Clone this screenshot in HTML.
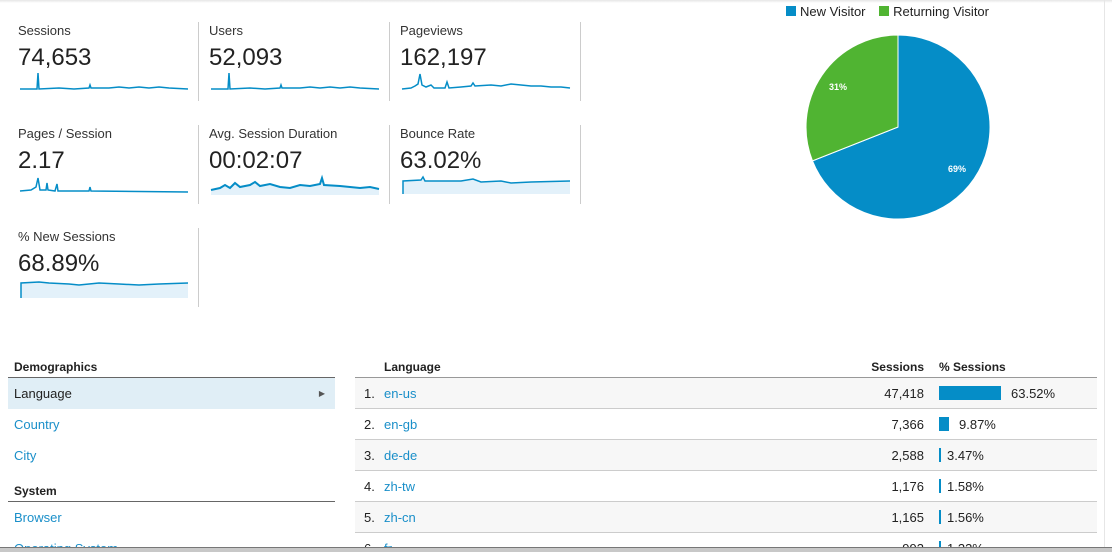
<!DOCTYPE html>
<html><head><meta charset="utf-8"><style>
body{margin:0;width:1112px;height:551px;overflow:hidden;background:#fff;font-family:"Liberation Sans",sans-serif;color:#222;position:relative}
.topsh{position:absolute;left:0;top:0;width:1112px;height:3px;background:linear-gradient(#e6e6e6,#fff)}
.m{position:absolute;width:180px;height:103px}
.m .l{position:absolute;left:0;top:23px;font-size:13px;color:#333}
.m .v{position:absolute;left:0;top:44px;font-size:24px;color:#222}
.m svg{position:absolute;left:1px;top:70px}
.d{position:absolute;width:1px;background:#ccc}
.a{color:#1a8fc9}
.nr{height:31px;line-height:31px;padding-left:6px}
.tr{height:30px;border-bottom:1px solid #ccc;position:relative;line-height:31px}
</style></head><body>
<div class="topsh"></div>
<div class="d" style="left:198px;top:22px;height:79px"></div>
<div class="d" style="left:389px;top:22px;height:79px"></div>
<div class="d" style="left:580px;top:22px;height:79px"></div>
<div class="d" style="left:198px;top:125px;height:79px"></div>
<div class="d" style="left:389px;top:125px;height:79px"></div>
<div class="d" style="left:580px;top:125px;height:79px"></div>
<div class="d" style="left:198px;top:228px;height:79px"></div>

<div class="m" style="left:18px;top:0"><div class="l">Sessions</div><div class="v">74,653</div>
<svg width="170" height="24"><path d="M1,19 L18,19 L19,3 L20,19 L40,18 L55,19 L70,18 L71,15 L72,18 L90,18 L100,17 L110,18 L120,17 L130,18 L140,17 L150,18 L169,19" fill="none" stroke="#058dc7" stroke-width="1.5"/></svg></div>
<div class="m" style="left:209px;top:0"><div class="l">Users</div><div class="v">52,093</div>
<svg width="170" height="24"><path d="M1,19 L18,19 L19,3 L20,19 L40,18 L55,19 L70,18 L71,15 L72,18 L90,18 L100,17 L110,18 L120,17 L130,18 L140,17 L150,18 L169,19" fill="none" stroke="#058dc7" stroke-width="1.5"/></svg></div>
<div class="m" style="left:400px;top:0"><div class="l">Pageviews</div><div class="v">162,197</div>
<svg width="170" height="24"><path d="M1,19 L10,18 L14,16 L17,14 L19,4 L21,15 L25,17 L30,15 L33,18 L44,18 L46,12 L48,18 L60,17 L70,16 L72,13 L74,16 L90,15 L100,16 L110,14 L120,15 L130,16 L140,16 L150,17 L160,17 L169,18" fill="none" stroke="#058dc7" stroke-width="1.5"/></svg></div>

<div class="m" style="left:18px;top:103px"><div class="l">Pages / Session</div><div class="v">2.17</div>
<svg width="170" height="24"><path d="M1,18 L12,17 L17,14 L19,5 L21,17 L27,17 L28,10 L29,17 L36,18 L38,11 L39,18 L70,18 L71,14 L72,18 L169,19" fill="none" stroke="#058dc7" stroke-width="1.5"/></svg></div>
<div class="m" style="left:209px;top:103px"><div class="l">Avg. Session Duration</div><div class="v">00:02:07</div>
<svg width="170" height="24"><path d="M1,17 L10,15 L15,12 L20,15 L25,10 L30,14 L40,12 L45,9 L50,13 L60,11 L70,14 L80,15 L90,12 L100,13 L110,11 L112,5 L114,12 L130,13 L150,15 L160,14 L169,16 L169,22 L1,22Z" fill="#e3f1fa" stroke="none"/><path d="M1,17 L10,15 L15,12 L20,15 L25,10 L30,14 L40,12 L45,9 L50,13 L60,11 L70,14 L80,15 L90,12 L100,13 L110,11 L112,5 L114,12 L130,13 L150,15 L160,14 L169,16" fill="none" stroke="#058dc7" stroke-width="2"/></svg></div>
<div class="m" style="left:400px;top:103px"><div class="l">Bounce Rate</div><div class="v">63.02%</div>
<svg width="170" height="24"><path d="M2,21 L2,8 L20,7 L22,4 L24,8 L60,8 L72,6 L80,9 L100,8 L110,10 L130,9 L169,8 L169,21Z" fill="#e3f1fa" stroke="none"/><path d="M2,21 L2,8 L20,7 L22,4 L24,8 L60,8 L72,6 L80,9 L100,8 L110,10 L130,9 L169,8" fill="none" stroke="#058dc7" stroke-width="1.5"/></svg></div>

<div class="m" style="left:18px;top:206px"><div class="l">% New Sessions</div><div class="v">68.89%</div>
<svg width="170" height="26"><path d="M2,22 L2,7 L20,6 L30,7 L50,8 L60,9 L80,7 L100,8 L120,9 L140,8 L169,7 L169,22Z" fill="#e3f1fa"/><path d="M2,22 L2,7 L20,6 L30,7 L50,8 L60,9 L80,7 L100,8 L120,9 L140,8 L169,7" fill="none" stroke="#058dc7" stroke-width="1.5"/></svg></div>

<div style="position:absolute;left:786px;top:4px;font-size:13px;color:#222">
<span style="display:inline-block;width:10px;height:10px;background:#058dc7;margin-right:4px"></span>New Visitor
<span style="display:inline-block;width:10px;height:10px;background:#50b432;margin:0 4px 0 10px"></span>Returning Visitor</div>
<svg style="position:absolute;left:0;top:0" width="1112" height="240">
<path d="M898,127 L898,35 A92,92 0 1 1 812.5,160.9 Z" fill="#058dc7" stroke="#fff" stroke-width="1"/>
<path d="M898,127 L812.5,160.9 A92,92 0 0 1 898,35 Z" fill="#50b432" stroke="#fff" stroke-width="1"/>
<text x="948" y="172" font-size="9" font-weight="bold" fill="#fff" font-family="Liberation Sans">69%</text>
<text x="829" y="90" font-size="9" font-weight="bold" fill="#fff" font-family="Liberation Sans">31%</text>
</svg>
<div style="position:absolute;left:1104px;top:0;width:1px;height:551px;background:#e6e6e6"></div>

<div style="position:absolute;left:8px;top:358px;width:327px;height:189px;overflow:hidden;font-size:13px">
<div style="font-weight:bold;padding:2px 6px 3px;border-bottom:1px solid #666;height:14px;font-size:12px">Demographics</div>
<div class="nr" style="background:#e0eef6;position:relative">Language<span style="position:absolute;right:10px;font-size:8px;color:#555">&#9654;</span></div>
<div class="a nr">Country</div>
<div class="a nr">City</div>
<div style="font-weight:bold;padding:13px 6px 3px;border-bottom:1px solid #666;height:14px;font-size:12px">System</div>
<div class="a nr">Browser</div>
<div class="a nr">Operating System</div>
</div>

<div style="position:absolute;left:355px;top:358px;width:742px;height:189px;overflow:hidden;font-size:13px">
<div style="height:19px;border-bottom:1px solid #999;font-weight:bold;position:relative;font-size:12px">
<span style="position:absolute;left:29px;top:2px">Language</span>
<span style="position:absolute;right:173px;top:2px">Sessions</span>
<span style="position:absolute;left:584px;top:2px">% Sessions</span></div>
<div class="tr" style="background:#f7f7f7"><span style="position:absolute;left:9px">1.</span><span class="a" style="position:absolute;left:29px">en-us</span><span style="position:absolute;right:173px">47,418</span><span style="position:absolute;left:584px;top:8px;width:62px;height:14px;background:#058dc7"></span><span style="position:absolute;left:656px">63.52%</span></div>
<div class="tr"><span style="position:absolute;left:9px">2.</span><span class="a" style="position:absolute;left:29px">en-gb</span><span style="position:absolute;right:173px">7,366</span><span style="position:absolute;left:584px;top:8px;width:10px;height:14px;background:#058dc7"></span><span style="position:absolute;left:604px">9.87%</span></div>
<div class="tr" style="background:#f7f7f7"><span style="position:absolute;left:9px">3.</span><span class="a" style="position:absolute;left:29px">de-de</span><span style="position:absolute;right:173px">2,588</span><span style="position:absolute;left:584px;top:8px;width:2px;height:14px;background:#058dc7"></span><span style="position:absolute;left:592px">3.47%</span></div>
<div class="tr"><span style="position:absolute;left:9px">4.</span><span class="a" style="position:absolute;left:29px">zh-tw</span><span style="position:absolute;right:173px">1,176</span><span style="position:absolute;left:584px;top:8px;width:2px;height:14px;background:#058dc7"></span><span style="position:absolute;left:592px">1.58%</span></div>
<div class="tr" style="background:#f7f7f7"><span style="position:absolute;left:9px">5.</span><span class="a" style="position:absolute;left:29px">zh-cn</span><span style="position:absolute;right:173px">1,165</span><span style="position:absolute;left:584px;top:8px;width:2px;height:14px;background:#058dc7"></span><span style="position:absolute;left:592px">1.56%</span></div>
<div class="tr" style="border:none"><span style="position:absolute;left:9px">6.</span><span class="a" style="position:absolute;left:29px">fr</span><span style="position:absolute;right:173px">993</span><span style="position:absolute;left:584px;top:8px;width:2px;height:14px;background:#058dc7"></span><span style="position:absolute;left:592px">1.33%</span></div>
</div>
<div style="position:absolute;left:0;top:547px;width:1112px;height:4px;background:#c8c8c8;border-top:1px solid #777"></div>
</body></html>
